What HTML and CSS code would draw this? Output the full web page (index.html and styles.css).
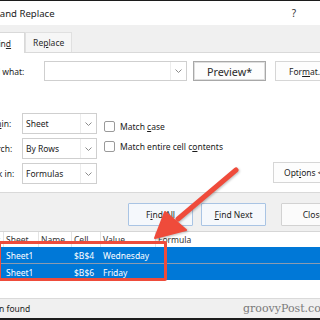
FILE: index.html
```html
<!DOCTYPE html>
<html>
<head>
<meta charset="utf-8">
<link rel="stylesheet" href="styles.css">
</head>
<body>
<div class="win">
  <div class="titlebar">
    <span class="title">Find and Replace</span>
    <span class="help">?</span>
  </div>
  <div class="tabbar">
    <div class="tab active">Fin<u>d</u></div>
    <div class="tab">Re<u>p</u>lace</div>
  </div>
  <div class="panel">
    <div class="findrow">
      <span class="lbl find-lbl">Fi<u>n</u>d what:</span>
      <div class="combo find-combo"><span class="val"></span><span class="drop"><svg width="7" height="4" viewBox="0 0 7 4"><polyline points="0.5,0.5 3.5,3.5 6.5,0.5" fill="none" stroke="#8c8c8c" stroke-width="1"/></svg></span></div>
      <div class="btn preview">Preview*</div>
      <div class="btn format">For<u>m</u>at...</div>
    </div>
    <div class="opts">
      <div class="sels">
        <div class="selrow"><span class="lbl sel-lbl">Wit<u>h</u>in:</span><div class="combo sel"><span class="val">Sheet</span><span class="drop"><svg width="7" height="4" viewBox="0 0 7 4"><polyline points="0.5,0.5 3.5,3.5 6.5,0.5" fill="none" stroke="#8c8c8c" stroke-width="1"/></svg></span></div></div>
        <div class="selrow"><span class="lbl sel-lbl"><u>S</u>earch:</span><div class="combo sel"><span class="val">By Rows</span><span class="drop"><svg width="7" height="4" viewBox="0 0 7 4"><polyline points="0.5,0.5 3.5,3.5 6.5,0.5" fill="none" stroke="#8c8c8c" stroke-width="1"/></svg></span></div></div>
        <div class="selrow"><span class="lbl sel-lbl"><u>L</u>ook in:</span><div class="combo sel"><span class="val">Formulas</span><span class="drop"><svg width="7" height="4" viewBox="0 0 7 4"><polyline points="0.5,0.5 3.5,3.5 6.5,0.5" fill="none" stroke="#8c8c8c" stroke-width="1"/></svg></span></div></div>
      </div>
      <div class="checks">
        <div class="check"><span class="box"></span><span>Match <u>c</u>ase</span></div>
        <div class="check"><span class="box"></span><span>Match entire cell c<u>o</u>ntents</span></div>
      </div>
      <div class="btn options">Opt<u>i</u>ons &lt;&lt;</div>
    </div>
  </div>
  <div class="actions">
    <div class="btn act findall">F<u>i</u>nd All</div>
    <div class="btn act findnext"><u>F</u>ind Next</div>
    <div class="btn act close">Close</div>
  </div>
  <div class="list">
    <div class="lrow lhead">
      <span class="c c-book">Book</span><span class="c">Sheet</span><span class="c">Name</span><span class="c">Cell</span><span class="c">Value</span><span class="c">Formula</span>
    </div>
    <div class="lrow selrow-b">
      <span class="c c-book"></span><span class="c">Sheet1</span><span class="c"></span><span class="c">$B$4</span><span class="c">Wednesday</span><span class="c"></span>
    </div>
    <div class="lrow selrow-b second">
      <span class="c c-book"></span><span class="c">Sheet1</span><span class="c"></span><span class="c">$B$6</span><span class="c">Friday</span><span class="c"></span>
    </div>
  </div>
  <div class="status">
    <span class="stxt">n found</span>
    <span class="wm">groovyPost.com</span>
  </div>
  <div class="hl"></div>
  <svg class="arrow" width="360" height="320" viewBox="0 0 360 320">
    <line x1="262" y1="170" x2="204" y2="219" stroke="#ef4b3b" stroke-width="5" stroke-linecap="round"/>
    <polygon points="181,238 191,212 212,230" fill="#ef4b3b" stroke="#ef4b3b" stroke-width="2" stroke-linejoin="round"/>
  </svg>
</div>
</body>
</html>
```

FILE: styles.css
```css
html, body {
  margin: 0;
  padding: 0;
  background: #ffffff;
  overflow: hidden;
  width: 320px;
  height: 320px;
}

.win {
  position: relative;
  width: 360px;
  height: 320px;
  margin-left: -26px;
  font-family: "Noto Sans", "DejaVu Sans", sans-serif;
  font-size: 8.5px;
  color: #1b1b1b;
  display: flex;
  flex-direction: column;
  background: #f0f0f0;
}

.win * { flex-shrink: 0; }

u { text-decoration: underline; text-underline-offset: 1px; }

.titlebar {
  height: 24px;
  border-top: 1px solid #1c1c1c;
  background: #ffffff;
  display: flex;
  align-items: center;
  justify-content: space-between;
  padding-left: 4px;
  padding-right: 38px;
}

.title { font-size: 9.6px; color: #222; }
.help { font-size: 10px; color: #333; }

.tabbar {
  height: 27px;
  box-sizing: border-box;
  padding-top: 7px;
  padding-left: 6px;
  display: flex;
  align-items: flex-end;
  background: #f0f0f0;
}

.tab {
  height: 20px;
  box-sizing: border-box;
  padding: 0 7px;
  display: flex;
  align-items: center;
  border: 1px solid #e0e0e0;
  border-bottom: none;
  background: #f6f6f6;
  color: #2a2a2a;
}

.tab.active {
  background: #ffffff;
  border-color: #d9d9d9;
  padding: 0 13px;
  margin-bottom: -1px;
  height: 21px;
  position: relative;
  z-index: 1;
}

.panel {
  background: #ffffff;
  border-top: 1px solid #d9d9d9;
  border-bottom: 1px solid #d9d9d9;
  padding: 8px 0 8px 9px;
  height: 141px;
  box-sizing: border-box;
}

.lbl { display: inline-block; color: #1e1e1e; white-space: nowrap; }
.find-lbl { width: 61px; }
.sel-lbl { width: 39px; }

.findrow {
  display: flex;
  align-items: center;
  height: 20px;
}

.combo {
  display: flex;
  box-sizing: border-box;
  border: 1px solid #cfcfcf;
  background: #fff;
  align-items: stretch;
}

.combo .val {
  flex: 1;
  display: flex;
  align-items: center;
  padding-left: 3px;
}

.combo .drop {
  width: 15px;
  border-left: 1px solid #ececec;
  display: flex;
  align-items: center;
  justify-content: center;
}

.find-combo { width: 143px; height: 20px; }

.btn {
  box-sizing: border-box;
  display: flex;
  align-items: center;
  justify-content: center;
  background: #fdfdfd;
  border: 1px solid #d6d6d6;
  color: #1e1e1e;
  white-space: nowrap;
}

.preview {
  width: 73px;
  height: 20px;
  margin-left: 6px;
  border: 1px solid #a8a8a8;
  box-shadow: inset 0 0 0 1px #dedede;
  font-size: 10.8px;
  color: #2b2b2b;
}

.format {
  width: 73px;
  height: 20px;
  margin-left: 9px;
  justify-content: flex-start;
  padding-left: 13px;
}

.opts {
  display: flex;
  margin-top: 32px;
}

.sels {
  display: flex;
  flex-direction: column;
  gap: 4px;
}

.selrow {
  display: flex;
  align-items: center;
}

.sel { width: 75px; height: 21px; }

.checks {
  width: 176px;
  padding-left: 7px;
  box-sizing: border-box;
  padding-top: 3px;
  display: flex;
  flex-direction: column;
}

.check {
  height: 20px;
  display: flex;
  align-items: center;
  gap: 5px;
}

.box {
  width: 11px;
  height: 11px;
  box-sizing: border-box;
  border: 1px solid #9a9a9a;
  border-radius: 2px;
  background: #fff;
}

.options {
  align-self: flex-end;
  width: 72px;
  height: 21px;
  margin-bottom: 1px;
  justify-content: flex-start;
  padding-left: 10px;
}

.actions {
  display: flex;
  padding-top: 10px;
  padding-left: 154px;
  height: 38px;
  box-sizing: border-box;
  background: #f0f0f0;
}

.act {
  height: 23px;
  width: 65px;
  background: #f5f8fc;
  border: 1px solid #a9c4e4;
  border-radius: 1px;
}

.findnext { margin-left: 8px; }
.close { margin-left: 15px; width: 65px; border-color: #d2d2d2; background: #fbfbfb; }

.list {
  background: #ffffff;
  border-top: 1px solid #d6d6d6;
  height: 66px;
  padding-left: 4px;
}

.lrow {
  display: grid;
  grid-template-columns: 25px 35px 33px 29px 55px 1fr;
  height: 16px;
  align-items: center;
}

.lhead { height: 15px; color: #333; }
.lhead .c { border-left: 1px solid #e3e3e3; height: 15px; }
.lhead .c-book { border-left: none; }

.c {
  padding-left: 2px;
  display: flex;
  align-items: center;
  white-space: nowrap;
  overflow: hidden;
  box-sizing: border-box;
}

.selrow-b .c { padding-left: 3px; }

.selrow-b {
  background: #0078d7;
  color: #ffffff;
  height: 16px;
}

.selrow-b.second {
  border-top: 1px solid #8a9bb0;
  height: 16px;
}

.status {
  flex: 1;
  display: flex;
  align-items: center;
  padding-left: 25px;
  background: #f0f0f0;
  border-top: 1px solid #dadada;
  border-bottom: 2px solid #1c1c1c;
  height: 23px;
  box-sizing: border-box;
}

.stxt { color: #1e1e1e; width: 244px; }

.wm {
  font-family: "DejaVu Serif", "Liberation Serif", serif;
  font-size: 11px;
  color: #7a7a7a;
  white-space: nowrap;
}

.hl {
  position: absolute;
  left: 24px;
  top: 241px;
  width: 169px;
  height: 40px;
  box-sizing: border-box;
  border: 3px solid #ee4c3b;
  border-radius: 2px;
}

.arrow {
  position: absolute;
  left: 0;
  top: 0;
  pointer-events: none;
  filter: drop-shadow(1px 1px 1px rgba(0,0,0,0.25));
}
```
